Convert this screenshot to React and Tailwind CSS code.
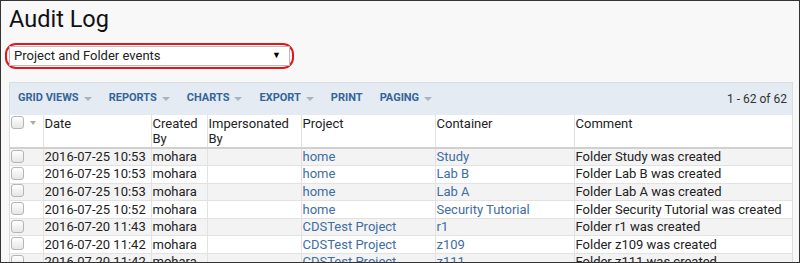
import React from "react";

const rows = [
    { date: "2016-07-25 10:53", by: "mohara", project: "home", container: "Study", comment: "Folder Study was created" },
    { date: "2016-07-25 10:53", by: "mohara", project: "home", container: "Lab B", comment: "Folder Lab B was created" },
    { date: "2016-07-25 10:53", by: "mohara", project: "home", container: "Lab A", comment: "Folder Lab A was created" },
    { date: "2016-07-25 10:52", by: "mohara", project: "home", container: "Security Tutorial", comment: "Folder Security Tutorial was created" },
    { date: "2016-07-20 11:43", by: "mohara", project: "CDSTest Project", container: "r1", comment: "Folder r1 was created" },
    { date: "2016-07-20 11:42", by: "mohara", project: "CDSTest Project", container: "z109", comment: "Folder z109 was created" },
    { date: "2016-07-20 11:42", by: "mohara", project: "CDSTest Project", container: "z111", comment: "Folder z111 was created" },
];

const Caret = () => (
    <span className="ml-[5px] inline-block h-0 w-0 border-x-[4px] border-t-[4px] border-x-transparent border-t-[#a9b4bf] align-middle" />
);

const Checkbox = () => (
    <span className="inline-block h-[13px] w-[13px] rounded-[3px] border border-[#b5b5b5] bg-gradient-to-b from-white to-[#e6e6e6]" />
);

const ToolbarButton = ({ label, caret = true }) => (
    <span className="flex items-center text-[11px] font-bold text-[#34659a]">
        {label}
        {caret && <Caret />}
    </span>
);

export default function App() {
    return (
        <div className="h-[263px] w-[800px] overflow-hidden border border-[#333] bg-[#f8f8f8] font-['Roboto',sans-serif] text-[#222]">
            <h1 className="ml-[8px] mt-[5px] text-[23.5px] leading-[27px] text-[#111]">Audit Log</h1>

            {/* Event type select, circled in red */}
            <div className="ml-[4px] mt-[10px] w-[289px] rounded-[11px] border-2 border-[#e8141b] px-[2px] py-[1px]">
                <div className="flex h-[20px] items-center justify-between border border-[#bbb] bg-white pl-[4px] pr-[8px] text-[13px] text-[#222]">
                    <span>Project and Folder events</span>
                    <span className="text-[9px] text-black">▼</span>
                </div>
            </div>

            {/* Grid panel */}
            <div className="ml-[8px] mt-[13px] w-[784px] border border-[#d8dde2] bg-white">
                <div className="flex h-[32px] items-center justify-between bg-[#e4ebf2] pb-[1px] pl-[8px] pr-[5px]">
                    <div className="flex items-center gap-[17px]">
                        <ToolbarButton label="GRID VIEWS" />
                        <ToolbarButton label="REPORTS" />
                        <ToolbarButton label="CHARTS" />
                        <ToolbarButton label="EXPORT" />
                        <ToolbarButton label="PRINT" caret={false} />
                        <ToolbarButton label="PAGING" />
                    </div>
                    <span className="text-[12px] text-[#333]">1 - 62 of 62</span>
                </div>

                <table className="w-full table-fixed border-collapse text-[13px] leading-[15px]">
                    <colgroup>
                        <col className="w-[33px]" />
                        <col className="w-[108px]" />
                        <col className="w-[56px]" />
                        <col className="w-[94px]" />
                        <col className="w-[134px]" />
                        <col className="w-[139px]" />
                        <col />
                    </colgroup>
                    <thead>
                        <tr className="h-[33px] border-b-2 border-[#d0d0d0] align-top">
                            <th className="px-[1px] pt-[1px] text-left font-normal">
                                <span className="flex items-center gap-[6px]">
                                    <Checkbox />
                                    <span className="inline-block h-0 w-0 border-x-[3.5px] border-t-[4px] border-x-transparent border-t-[#aaa]" />
                                </span>
                            </th>
                            <th className="border-l border-[#e2e2e2] px-[1px] pt-[1px] text-left font-normal">Date</th>
                            <th className="border-l border-[#e2e2e2] px-[1px] pt-[1px] text-left font-normal">Created By</th>
                            <th className="border-l border-[#e2e2e2] px-[1px] pt-[1px] text-left font-normal">Impersonated By</th>
                            <th className="border-l border-[#e2e2e2] px-[1px] pt-[1px] text-left font-normal">Project</th>
                            <th className="border-l border-[#e2e2e2] px-[1px] pt-[1px] text-left font-normal">Container</th>
                            <th className="border-l border-[#e2e2e2] px-[1px] pt-[1px] text-left font-normal">Comment</th>
                        </tr>
                    </thead>
                    <tbody>
                        {rows.map((r, i) => (
                            <tr key={i} className={`h-[17.6px] border-b border-[#e2e2e2] ${i % 2 === 0 ? "bg-[#f3f3f3]" : "bg-white"}`}>
                                <td className="px-[1px] leading-none">
                                    <Checkbox />
                                </td>
                                <td className="whitespace-nowrap border-l border-[#e2e2e2] px-[1px] pb-[1px]">{r.date}</td>
                                <td className="border-l border-[#e2e2e2] px-[1px] pb-[1px]">{r.by}</td>
                                <td className="border-l border-[#e2e2e2] px-[1px] pb-[1px]"></td>
                                <td className="whitespace-nowrap border-l border-[#e2e2e2] px-[1px] pb-[1px] text-[#3e6ea3]">{r.project}</td>
                                <td className="whitespace-nowrap border-l border-[#e2e2e2] px-[1px] pb-[1px] text-[#3e6ea3]">{r.container}</td>
                                <td className="whitespace-nowrap border-l border-[#e2e2e2] px-[1px] pb-[1px]">{r.comment}</td>
                            </tr>
                        ))}
                    </tbody>
                </table>
            </div>
        </div>
    );
}
